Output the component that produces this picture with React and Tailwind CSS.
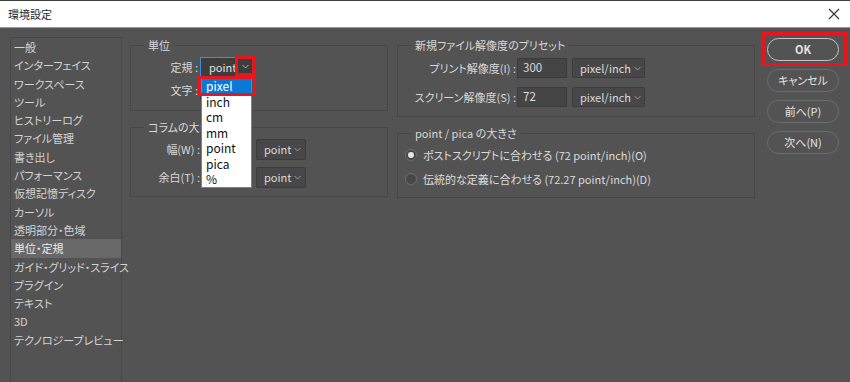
import React from 'react';

const sideItems = [
  '一般',
  'インターフェイス',
  'ワークスペース',
  'ツール',
  'ヒストリーログ',
  'ファイル管理',
  '書き出し',
  'パフォーマンス',
  '仮想記憶ディスク',
  'カーソル',
  '透明部分・色域',
  '単位・定規',
  'ガイド・グリッド・スライス',
  'プラグイン',
  'テキスト',
  '3D',
  'テクノロジープレビュー',
];

const unitOptions = ['pixel', 'inch', 'cm', 'mm', 'point', 'pica', '%'];

const Chevron = ({ className = '' }) => (
  <svg width="7" height="5" viewBox="0 0 7 5" className={`shrink-0 ${className}`}>
    <path d="M0.5 1 L3.5 4 L6.5 1" fill="none" stroke="currentColor" strokeWidth="1" />
  </svg>
);

const Select = ({ value, className = '' }) => (
  <div
    className={`flex items-center justify-between gap-[3px] h-[20px] pl-[7px] pr-[5px] bg-[#474747] border border-[#3c3c3c] rounded-[2px] text-[#dcdcdc] text-[11px] ${className}`}
  >
    <span className="whitespace-nowrap">{value}</span>
    <Chevron className="text-[#9c9c9c]" />
  </div>
);

const Input = ({ value, className = '' }) => (
  <div className={`flex items-center h-[20px] px-[5px] bg-[#454545] border border-[#3b3b3b] text-[#dcdcdc] text-[11.5px] ${className}`}>
    {value}
  </div>
);

const Group = ({ title, className = '', children }) => (
  <fieldset className={`border border-[#474747] ${className}`}>
    <legend className="ml-[13px] px-[4px] leading-[16px] text-[#d8d8d8]">{title}</legend>
    {children}
  </fieldset>
);

const Radio = ({ checked }) => (
  <span className="flex items-center justify-center w-[12px] h-[12px] rounded-full border border-[#6e6e6e] bg-[#474747]">
    {checked && <span className="w-[6px] h-[6px] rounded-full bg-[#e6e6e6]" />}
  </span>
);

const Button = ({ children, primary }) => (
  <button
    className={`w-[72px] h-[23px] rounded-full text-[#e4e4e4] bg-[#535353] ${
      primary ? 'border-[1.5px] border-[#c4c4c4] font-semibold' : 'border-[1.5px] border-[#6c6c6c]'
    }`}
  >
    {children}
  </button>
);

export default function App() {
  return (
    <div className="w-[850px] h-[382px] overflow-hidden bg-[#535353] text-[11px] font-['Noto_Sans_CJK_JP','Noto_Sans',sans-serif] [font-feature-settings:'palt']">
      {/* title bar */}
      <div className="flex items-center justify-between h-[28px] bg-white border-t border-[#3f3f3f] border-b border-b-[#9a9a9a] pl-[8px] pr-[10px]">
        <span className="text-[#1e1e1e] text-[11px]">環境設定</span>
        <svg width="12" height="12" viewBox="0 0 12 12" className="text-[#333]">
          <path d="M1 1 L11 11 M11 1 L1 11" stroke="currentColor" strokeWidth="1.1" />
        </svg>
      </div>

      <div className="flex pl-[10px]">
        {/* sidebar */}
        <div className="mt-[9px] w-[112px] h-[350px] border border-[#474747] text-[#d4d4d4]">
          {sideItems.map((item, i) => (
            <div
              key={item}
              className={`h-[18.3px] leading-[18.3px] pl-[3px] whitespace-nowrap ${i === 11 ? 'bg-[#686868] text-[#ececec]' : ''}`}
            >
              {item}
            </div>
          ))}
        </div>

        {/* middle column */}
        <div className="ml-[8px] mt-[9px] w-[258px] flex flex-col gap-[8px]">
          <Group title="単位" className="h-[74px]">
            <div className="flex flex-col gap-[3px] pt-[4px]">
              <div className="flex items-center">
                <span className="w-[67px] text-right text-[#d8d8d8]">定規 :</span>
                <div className="relative ml-[2px]">
                  <div className="flex items-center w-[52px] h-[20px] pl-[8px] bg-[#3d3d3d] border border-[#3f8ee0] text-[#e0e0e0] text-[11px]">
                    point
                  </div>
                  {/* arrow button highlighted */}
                  <div className="absolute left-[35px] -top-[1px] w-[20px] h-[20px] border-[3px] border-[#e8151d] bg-[#3d3d3d] flex items-center justify-center">
                    <Chevron className="text-[#b0b0b0]" />
                  </div>
                  {/* open dropdown list */}
                  <div className="absolute left-[1px] top-[19px] w-[51px] h-[112px] bg-white border border-[#3f8ee0] pt-[1px] z-10">
                    {unitOptions.map((o, i) => (
                      <div
                        key={o}
                        className={`h-[15.5px] leading-[15.5px] pl-[4px] text-[12px] ${
                          i === 0 ? 'bg-[#0a78d7] text-white' : 'text-[#111]'
                        }`}
                      >
                        {o}
                      </div>
                    ))}
                    <div className="absolute -left-[4px] -top-[1px] w-[58px] h-[20px] border-[3px] border-[#e8151d]" />
                  </div>
                </div>
              </div>
              <div className="flex items-center">
                <span className="w-[67px] text-right text-[#d8d8d8]">文字 :</span>
                <Select value="point" className="ml-[2px] w-[52px]" />
              </div>
            </div>
          </Group>

          <Group title="コラムの大きさ" className="h-[78px]">
            <div className="flex flex-col gap-[7px] pt-[4px]">
              <div className="flex items-center">
                <span className="w-[69px] text-right text-[#d8d8d8]">幅(W) :</span>
                <Input value="" className="ml-[1px] w-[50px]" />
                <Select value="point" className="ml-[5px] w-[50px] h-[21px]" />
              </div>
              <div className="flex items-center">
                <span className="w-[69px] text-right text-[#d8d8d8]">余白(T) :</span>
                <Input value="" className="ml-[1px] w-[50px]" />
                <Select value="point" className="ml-[5px] w-[50px] h-[21px]" />
              </div>
            </div>
          </Group>
        </div>

        {/* right column */}
        <div className="ml-[9px] mt-[9px] w-[358px] flex flex-col gap-[8px]">
          <Group title="新規ファイル解像度のプリセット" className="h-[80px]">
            <div className="flex flex-col gap-[9px] pt-[5px]">
              <div className="flex items-center">
                <span className="w-[118px] text-right text-[#d8d8d8]">プリント解像度(I) :</span>
                <Input value="300" className="ml-[1px] w-[50px]" />
                <Select value="pixel/inch" className="ml-[5px] w-[73px]" />
              </div>
              <div className="flex items-center">
                <span className="w-[118px] text-right text-[#d8d8d8]">スクリーン解像度(S) :</span>
                <Input value="72" className="ml-[1px] w-[50px]" />
                <Select value="pixel/inch" className="ml-[5px] w-[73px]" />
              </div>
            </div>
          </Group>

          <Group title="point / pica の大きさ" className="h-[73px]">
            <div className="flex flex-col gap-[6px] pt-[5px] pl-[7px] text-[#dcdcdc]">
              <div className="flex items-center h-[18px] gap-[6px]">
                <Radio checked />
                <span>ポストスクリプトに合わせる (72 point/inch)(O)</span>
              </div>
              <div className="flex items-center h-[18px] gap-[6px]">
                <Radio />
                <span>伝統的な定義に合わせる (72.27 point/inch)(D)</span>
              </div>
            </div>
          </Group>
        </div>

        {/* buttons */}
        <div className="ml-[12px] mt-[10px] flex flex-col gap-[8px]">
          <div className="relative">
            <Button primary>OK</Button>
            <div className="absolute -left-[5px] -top-[6px] w-[85px] h-[34px] border-[3px] border-[#e8151d]" />
          </div>
          <Button>キャンセル</Button>
          <Button>前へ(P)</Button>
          <Button>次へ(N)</Button>
        </div>
      </div>
    </div>
  );
}
